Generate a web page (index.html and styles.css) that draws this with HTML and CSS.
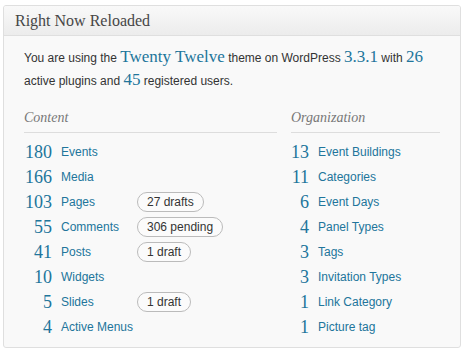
FILE: index.html
```html
<!DOCTYPE html>
<html lang="en">
<head>
    <meta charset="UTF-8">
    <title>Right Now Reloaded</title>
    <link rel="stylesheet" href="styles.css">
</head>
<body>
    <div class="widget">
        <div class="widget-title">Right Now Reloaded</div>
        <div class="widget-body">
            <p class="intro">You are using the <span class="big">Twenty Twelve</span> theme on WordPress <span class="big">3.3.1</span> with <span class="big">26</span> active plugins and <span class="big">45</span> registered users.</p>

            <div class="columns">
                <div class="col content">
                    <h4>Content</h4>
                    <div class="row"><span class="num">180</span><span class="label">Events</span></div>
                    <div class="row"><span class="num">166</span><span class="label">Media</span></div>
                    <div class="row"><span class="num">103</span><span class="label">Pages</span><span class="pill">27 drafts</span></div>
                    <div class="row"><span class="num">55</span><span class="label">Comments</span><span class="pill">306 pending</span></div>
                    <div class="row"><span class="num">41</span><span class="label">Posts</span><span class="pill">1 draft</span></div>
                    <div class="row"><span class="num">10</span><span class="label">Widgets</span></div>
                    <div class="row"><span class="num">5</span><span class="label">Slides</span><span class="pill">1 draft</span></div>
                    <div class="row"><span class="num">4</span><span class="label">Active Menus</span></div>
                </div>
                <div class="col org">
                    <h4>Organization</h4>
                    <div class="row"><span class="num">13</span><span class="label">Event Buildings</span></div>
                    <div class="row"><span class="num">11</span><span class="label">Categories</span></div>
                    <div class="row"><span class="num">6</span><span class="label">Event Days</span></div>
                    <div class="row"><span class="num">4</span><span class="label">Panel Types</span></div>
                    <div class="row"><span class="num">3</span><span class="label">Tags</span></div>
                    <div class="row"><span class="num">3</span><span class="label">Invitation Types</span></div>
                    <div class="row"><span class="num">1</span><span class="label">Link Category</span></div>
                    <div class="row"><span class="num">1</span><span class="label">Picture tag</span></div>
                </div>
            </div>
        </div>
    </div>
</body>
</html>
```

FILE: styles.css
```css
body {
    margin: 0;
    background: #fff;
    font-family: "Liberation Sans", Arial, sans-serif;
    font-size: 12px;
    color: #333;
}
.widget {
    margin: 5px 2px 0 3px;
    height: 343px;
    box-sizing: border-box;
    border: 1px solid #dfdfdf;
    border-radius: 3px;
    background: #f9f9f9;
    overflow: hidden;
}
.widget-title {
    height: 29px;
    line-height: 29px;
    padding: 0 11px;
    font-family: "Liberation Serif", "Times New Roman", serif;
    font-size: 16px;
    color: #464646;
    background: linear-gradient(to bottom, #f9f9f9, #ececec);
    border-bottom: 1px solid #dfdfdf;
}
.widget-body {
    padding: 10px 20px 0 20px;
}
.intro {
    margin: 0;
    line-height: 22px;
}
.big {
    font-family: "Liberation Serif", Georgia, serif;
    font-size: 17px;
    color: #21759b;
}
.columns {
    display: grid;
    grid-template-columns: 253px 1fr;
    column-gap: 14px;
    margin-top: 8px;
}
h4 {
    margin: 0 0 6px 0;
    padding: 8px 0 4px 0;
    line-height: 20px;
    font-family: "Liberation Serif", Georgia, serif;
    font-style: italic;
    font-weight: normal;
    font-size: 14px;
    color: #777;
    border-bottom: 1px solid #ddd;
}
.row {
    display: flex;
    align-items: center;
    height: 25px;
}
.num {
    flex: none;
    text-align: right;
    font-family: "Liberation Serif", Georgia, serif;
    font-size: 18px;
    color: #21759b;
    padding-top: 2px;
}
.content .num {
    width: 28px;
}
.org .num {
    width: 18px;
}
.label {
    flex: none;
    margin-left: 9px;
    color: #21759b;
    white-space: nowrap;
}
.content .label {
    min-width: 76px;
}
.pill {
    height: 18px;
    line-height: 18px;
    padding: 0 9px;
    border: 1px solid #bbb;
    border-radius: 10px;
    background: #fbfbfb;
    color: #333;
    font-size: 12px;
}
```
